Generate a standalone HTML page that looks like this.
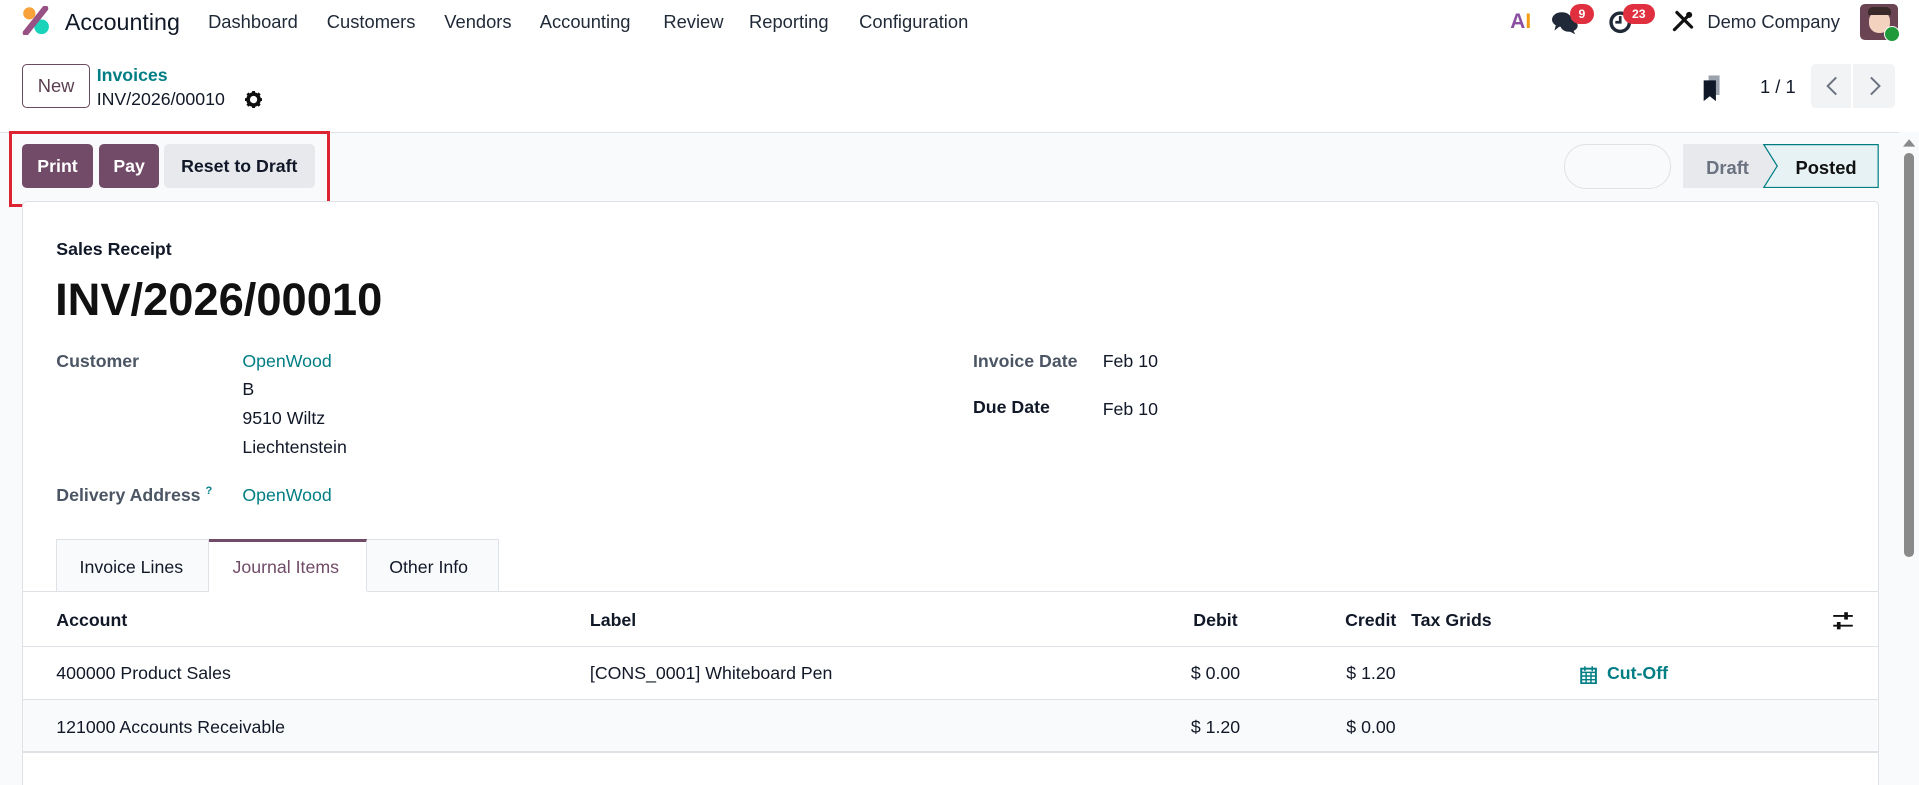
<!DOCTYPE html>
<html><head><meta charset="utf-8"><style>
html,body{margin:0;padding:0;}
body{width:1919px;height:785px;overflow:hidden;background:#fff;font-family:"Liberation Sans",sans-serif;color:#111827;}
#w{zoom:1.2239;width:1568px;height:641px;position:relative;overflow:hidden;}
.a{position:absolute;white-space:nowrap;}
.nav{font-size:15px;color:#1f2937;top:9px;}
.btn{position:absolute;top:118px;height:36px;border-radius:4px;font-size:14.5px;font-weight:bold;line-height:36px;text-align:center;}
.lbl{font-size:14.5px;color:#4b5563;}
.v{font-size:14.5px;color:#111827;}
.teal{color:#017e84;}
.hl{position:absolute;left:18px;width:1517px;height:1px;background:#dee2e6;}
.th{font-size:14.5px;font-weight:bold;top:498px;}
.td{font-size:14.5px;}
</style></head><body><div id="w">
<svg class="a" style="left:18px;top:5px" width="23" height="24" viewBox="0 0 23 24"><circle cx="6" cy="6" r="5" fill="#f9a13a"/><circle cx="16" cy="17" r="6" fill="#1ad3bb"/><path d="M3 22 L19 2" stroke="#985184" stroke-width="5" stroke-linecap="round"/></svg>
<div class="a" style="left:53px;top:7px;font-size:19px;color:#111827">Accounting</div>
<div class="a nav" style="left:170px">Dashboard</div>
<div class="a nav" style="left:267px">Customers</div>
<div class="a nav" style="left:363px">Vendors</div>
<div class="a nav" style="left:441px">Accounting</div>
<div class="a nav" style="left:542px">Review</div>
<div class="a nav" style="left:612px">Reporting</div>
<div class="a nav" style="left:702px">Configuration</div>
<div class="a" style="left:1234px;top:8px;font-size:17px;font-weight:bold;color:#8a4fa0">A<span style="color:#f39c12">I</span></div>
<svg class="a" style="left:1268px;top:9px" width="22" height="20" viewBox="0 0 22 20"><ellipse cx="8" cy="7" rx="8" ry="6" fill="#1f2937"/><ellipse cx="14" cy="12" rx="7" ry="5" fill="#1f2937"/><path d="M3 12 L2 16 L7 12Z M17 15 L19 19 L13 16Z" fill="#1f2937"/></svg>
<div class="a" style="left:1283px;top:3px;width:19px;height:17px;border-radius:9px;background:#e0303f;color:#fff;font-size:10px;font-weight:bold;text-align:center;line-height:17px">9</div>
<svg class="a" style="left:1314px;top:8px" width="20" height="20" viewBox="0 0 20 20"><circle cx="10" cy="10" r="7.5" fill="none" stroke="#1f2937" stroke-width="2.8"/><path d="M10 5v5h-4" stroke="#1f2937" stroke-width="2.2" fill="none"/></svg>
<div class="a" style="left:1326px;top:3px;width:26px;height:17px;border-radius:9px;background:#e0303f;color:#fff;font-size:10px;font-weight:bold;text-align:center;line-height:17px">23</div>
<svg class="a" style="left:1366px;top:8px" width="18" height="18" viewBox="0 0 18 18"><path d="M2 16 L14 4 M4 2 L16 14" stroke="#111" stroke-width="2.6" stroke-linecap="round"/><circle cx="14" cy="4" r="2.5" fill="#111"/></svg>
<div class="a" style="left:1395px;top:9px;font-size:15px;color:#1f2937">Demo Company</div>
<div class="a" style="left:1520px;top:3px;width:31px;height:30px;border-radius:4px;background:#6b4453"><div style="position:absolute;left:7px;top:6px;width:17px;height:18px;border-radius:8px;background:#f3d2bf"></div><div style="position:absolute;left:6px;top:3px;width:19px;height:6px;background:#3a2a2a;border-radius:4px 4px 0 0"></div></div>
<div class="a" style="left:1539px;top:21px;width:12px;height:12px;border-radius:50%;background:#1f9a3a;border:1px solid #fff"></div>
<div class="a" style="left:18px;top:52px;width:54px;height:35px;border:1px solid #6b4c5e;border-radius:4px;font-size:15px;color:#5b3f51;text-align:center;line-height:35px">New</div>
<div class="a teal" style="left:79px;top:53px;font-size:14.5px;font-weight:bold">Invoices</div>
<div class="a" style="left:79px;top:73px;font-size:14.5px">INV/2026/00010</div>
<svg class="a" style="left:200px;top:74px" width="14" height="14" viewBox="0 0 14 14"><circle cx="7" cy="7" r="4.5" fill="none" stroke="#111" stroke-width="3"/><path d="M7 0v3M7 11v3M0 7h3M11 7h3M2 2l2 2M10 10l2 2M2 12l2-2M10 4l2-2" stroke="#111" stroke-width="2.4"/></svg>
<svg class="a" style="left:1389px;top:60px" width="20" height="24" viewBox="0 0 20 24"><rect x="7" y="2" width="9" height="16" fill="#9ca3af"/><path d="M3 6h10v17l-5-4-5 4z" fill="#111827"/></svg>
<div class="a" style="left:1438px;top:62px;font-size:15px">1 / 1</div>
<div class="a" style="left:1480px;top:52px;width:32px;height:36px;background:#f1f3f5;border-radius:4px 0 0 4px"></div>
<div class="a" style="left:1514px;top:52px;width:34px;height:36px;background:#f1f3f5;border-radius:0 4px 4px 0"></div>
<svg class="a" style="left:1490px;top:61px" width="14" height="18"><path d="M10 2 L3 9 L10 16" stroke="#6b7280" stroke-width="1.6" fill="none"/></svg>
<svg class="a" style="left:1525px;top:61px" width="14" height="18"><path d="M4 2 L11 9 L4 16" stroke="#6b7280" stroke-width="1.6" fill="none"/></svg>
<div class="a" style="left:0;top:108px;width:1568px;height:533px;background:#f9fafb;border-top:1px solid #dee2e6"></div>
<div class="btn" style="left:18px;width:58px;background:#714b67;color:#fff">Print</div>
<div class="btn" style="left:81px;width:49px;background:#714b67;color:#fff">Pay</div>
<div class="btn" style="left:134px;width:123px;background:#e7e9ed;color:#111827">Reset to Draft</div>
<div class="a" style="left:7px;top:107px;width:258px;height:57px;border:3px solid #dc2433"></div>
<div class="a" style="left:1278px;top:118px;width:86px;height:35px;border:1px solid #dee2e6;border-radius:18px;background:#f9fafb"></div>
<svg class="a" style="left:1375px;top:118px" width="161" height="36" viewBox="0 0 161 36"><rect x="0" y="0" width="80" height="36" fill="#e7e9ed"/><path d="M66 0.5 H159.5 V35.5 H66 L77 18 Z" fill="#e6f2f3" stroke="#017e84" stroke-width="1"/></svg>
<div class="a" style="left:1394px;top:128px;font-size:15px;font-weight:bold;color:#6b7280">Draft</div>
<div class="a" style="left:1467px;top:128px;font-size:15px;font-weight:bold;color:#111">Posted</div>
<div class="a" style="left:18px;top:164px;width:1516px;height:490px;background:#fff;border:1px solid #dee2e6;border-radius:4px"></div>
<div class="a" style="left:46px;top:195px;font-size:14.5px;font-weight:bold">Sales Receipt</div>
<div class="a" style="left:45px;top:224px;font-size:37px;font-weight:bold;color:#111">INV/2026/00010</div>
<div class="a lbl" style="left:46px;top:287px;font-weight:bold">Customer</div>
<div class="a v teal" style="left:198px;top:287px">OpenWood</div>
<div class="a v" style="left:198px;top:310px">B</div>
<div class="a v" style="left:198px;top:333px">9510 Wiltz</div>
<div class="a v" style="left:198px;top:357px">Liechtenstein</div>
<div class="a lbl" style="left:46px;top:396px;font-weight:bold">Delivery Address <sup style="font-size:9px;color:#017e84">?</sup></div>
<div class="a v teal" style="left:198px;top:396px">OpenWood</div>
<div class="a lbl" style="left:795px;top:287px;font-weight:bold">Invoice Date</div>
<div class="a v" style="left:901px;top:287px">Feb 10</div>
<div class="a v" style="left:795px;top:324px;font-weight:bold">Due Date</div>
<div class="a v" style="left:901px;top:326px">Feb 10</div>
<div class="a" style="left:46px;top:440px;width:125px;height:43px;border:1px solid #dee2e6;border-bottom:none;background:#f9fafb;box-sizing:border-box"></div>
<div class="a" style="left:171px;top:440px;width:129px;height:44px;border-top:3px solid #714b67;border-right:1px solid #dee2e6;background:#fff;box-sizing:border-box"></div>
<div class="a" style="left:300px;top:440px;width:108px;height:43px;border:1px solid #dee2e6;border-bottom:none;border-left:none;background:#f9fafb;box-sizing:border-box"></div>
<div class="a td" style="left:65px;top:455px">Invoice Lines</div>
<div class="a td" style="left:190px;top:455px;color:#714b67">Journal Items</div>
<div class="a td" style="left:318px;top:455px">Other Info</div>
<div class="hl" style="top:483px"></div>
<div class="a" style="left:171px;top:483px;width:129px;height:1px;background:#fff"></div>
<div class="a th" style="left:46px">Account</div>
<div class="a th" style="left:482px">Label</div>
<div class="a th" style="left:975px">Debit</div>
<div class="a th" style="left:1099px">Credit</div>
<div class="a th" style="left:1153px">Tax Grids</div>
<svg class="a" style="left:1497px;top:499px" width="18" height="16" viewBox="0 0 18 16"><path d="M1 4h16M1 12h16" stroke="#111" stroke-width="1.5"/><rect x="10" y="1" width="3" height="6" fill="#111"/><rect x="4" y="9" width="3" height="6" fill="#111"/></svg>
<div class="hl" style="top:528px"></div>
<div class="a td" style="left:46px;top:542px">400000 Product Sales</div>
<div class="a td" style="left:482px;top:542px">[CONS_0001] Whiteboard Pen</div>
<div class="a td" style="left:973px;top:542px">$ 0.00</div>
<div class="a td" style="left:1100px;top:542px">$ 1.20</div>
<svg class="a" style="left:1291px;top:543px" width="14" height="16" viewBox="0 0 14 16"><rect x="1" y="3" width="12" height="12" fill="none" stroke="#017e84" stroke-width="1.6"/><path d="M1 6h12M4 1v4M10 1v4M1 9h12M1 12h12M5 6v9M9 6v9" stroke="#017e84" stroke-width="1.2"/></svg>
<div class="a td teal" style="left:1313px;top:542px;font-weight:bold">Cut-Off</div>
<div class="hl" style="top:571px"></div>
<div class="a" style="left:19px;top:572px;width:1515px;height:42px;background:#f9fafb"></div>
<div class="a td" style="left:46px;top:586px">121000 Accounts Receivable</div>
<div class="a td" style="left:973px;top:586px">$ 1.20</div>
<div class="a td" style="left:1100px;top:586px">$ 0.00</div>
<div class="hl" style="top:614px"></div>
<div class="a" style="left:1552px;top:108px;width:16px;height:533px;background:#f9fafb"></div>
<svg class="a" style="left:1555px;top:113px" width="10" height="8"><path d="M0 7 L5 1 L10 7Z" fill="#8a8a8a"/></svg>
<div class="a" style="left:1556px;top:125px;width:8px;height:330px;border-radius:4px;background:#8a8a8a"></div>
</div></body></html>
